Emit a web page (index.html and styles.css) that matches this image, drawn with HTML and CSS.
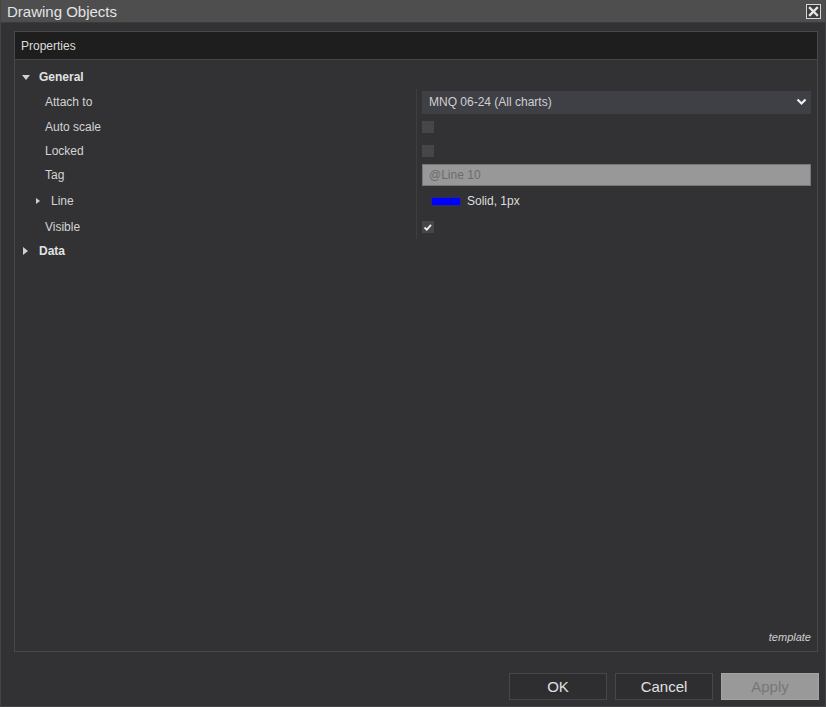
FILE: index.html
```html
<!DOCTYPE html>
<html lang="en">
<head>
    <meta charset="UTF-8">
    <title>Drawing Objects</title>
    <link rel="stylesheet" href="styles.css">
</head>
<body>
    <div class="window">
        <div class="titlebar">
            <span class="title">Drawing Objects</span>
            <span class="close">
                <svg width="15" height="15" viewBox="0 0 15 15">
                    <rect x="0.5" y="0.5" width="14" height="14" fill="#3c3c3c" stroke="#d8d8d8"/>
                    <path d="M4 4 L11 11 M11 4 L4 11" stroke="#e6e6e6" stroke-width="2.4" stroke-linecap="square"/>
                </svg>
            </span>
        </div>
        <div class="content">
            <div class="panel">
                <div class="panel-header">Properties</div>
                <div class="props">
                    <!-- General -->
                    <div class="cat h24"><span class="tri-down"></span>General</div>
                    <div class="row h26">
                        <div class="label">Attach to</div>
                        <div class="value">
                            <div class="select">
                                <span>MNQ 06-24 (All charts)</span>
                                <svg width="11" height="8" viewBox="0 0 11 8"><path d="M1.5 1.5 L5.5 5.5 L9.5 1.5" fill="none" stroke="#f0f0f0" stroke-width="2.2"/></svg>
                            </div>
                        </div>
                    </div>
                    <div class="row h24">
                        <div class="label">Auto scale</div>
                        <div class="value"><span class="check"></span></div>
                    </div>
                    <div class="row h24">
                        <div class="label">Locked</div>
                        <div class="value"><span class="check"></span></div>
                    </div>
                    <div class="row h24">
                        <div class="label">Tag</div>
                        <div class="value"><div class="input">@Line 10</div></div>
                    </div>
                    <div class="row h28">
                        <div class="label sub"><span class="tri-right small"></span>Line</div>
                        <div class="value"><span class="swatch"></span><span class="stroke-text">Solid, 1px</span></div>
                    </div>
                    <div class="row h24">
                        <div class="label">Visible</div>
                        <div class="value">
                            <span class="check">
                                <svg width="12" height="12" viewBox="0 0 12 12"><path d="M2.5 6.5 L4.8 8.6 L9 3.8" fill="none" stroke="#f0f0f0" stroke-width="1.8"/></svg>
                            </span>
                        </div>
                    </div>
                    <!-- Data -->
                    <div class="cat h24"><span class="tri-right"></span>Data</div>
                </div>
                <div class="template">template</div>
            </div>
            <div class="footer">
                <button class="btn">OK</button>
                <button class="btn">Cancel</button>
                <button class="btn disabled">Apply</button>
            </div>
        </div>
    </div>
</body>
</html>
```

FILE: styles.css
```css
body {
    margin: 0;
    background: #333336;
    font-family: "Liberation Sans", Arial, sans-serif;
    -webkit-font-smoothing: antialiased;
}
.window {
    width: 826px;
    height: 707px;
    box-sizing: border-box;
    border: 1px solid #444447;
    border-top: 0;
    background: #323235;
    display: flex;
    flex-direction: column;
}
.titlebar {
    height: 23px;
    background: #4e4e4e;
    border-bottom: 1px solid #3a3a3a;
    box-sizing: border-box;
    display: flex;
    align-items: center;
    justify-content: space-between;
    padding: 0 4px 0 6px;
}
.title {
    color: #e4e4e4;
    font-size: 15px;
    line-height: 23px;
}
.close { display: flex; margin-top: 1px; }
.content {
    flex: 1;
    padding: 8px 6px 0 13px;
    display: flex;
    flex-direction: column;
}
.panel {
    height: 621px;
    width: 804px;
    box-sizing: border-box;
    border: 1px solid #48484b;
    display: flex;
    flex-direction: column;
}
.panel-header {
    height: 28px;
    box-sizing: border-box;
    background: #1e1e1e;
    border-bottom: 1px solid #454548;
    color: #dcdcdc;
    font-size: 12px;
    line-height: 28px;
    padding-left: 6px;
}
.props {
    flex: 1;
    padding-top: 5px;
    font-size: 12px;
    color: #d4d4d4;
}
.h24 { height: 24px; }
.h26 { height: 26px; }
.h28 { height: 28px; }
.cat {
    display: flex;
    align-items: center;
    font-weight: bold;
    color: #e2e2e2;
    padding-left: 7px;
}
.tri-down {
    width: 0;
    height: 0;
    border-left: 4px solid transparent;
    border-right: 4px solid transparent;
    border-top: 5px solid #d0d0d0;
    margin-right: 9px;
}
.tri-right {
    width: 0;
    height: 0;
    border-top: 4.5px solid transparent;
    border-bottom: 4.5px solid transparent;
    border-left: 5px solid #d0d0d0;
    margin-left: 1px;
    margin-right: 11px;
}
.tri-right.small {
    border-top-width: 3.5px;
    border-bottom-width: 3.5px;
    border-left-width: 4px;
    margin-left: 0;
    margin-right: 11px;
}
.row { display: flex; }
.label {
    width: 402px;
    box-sizing: border-box;
    border-right: 1px solid #3e3e41;
    padding-left: 30px;
    display: flex;
    align-items: center;
}
.label.sub { padding-left: 21px; }
.value {
    flex: 1;
    padding: 0 6px 0 5px;
    display: flex;
    align-items: center;
}
.select {
    flex: 1;
    height: 23px;
    background: #3f3f46;
    display: flex;
    align-items: center;
    justify-content: space-between;
    padding: 0 4px 0 7px;
    color: #d0d0d0;
}
.check {
    width: 12px;
    height: 12px;
    background: #45454a;
    display: flex;
}
.input {
    flex: 1;
    height: 22px;
    box-sizing: border-box;
    background: #989898;
    border: 1px solid #777779;
    color: #6c6c6c;
    line-height: 20px;
    padding-left: 6px;
}
.swatch {
    width: 30px;
    height: 9px;
    box-sizing: border-box;
    background: #0000ff;
    border: 1px solid #2a2a70;
    margin-left: 9px;
    margin-right: 6px;
}
.stroke-text { color: #dcdcdc; }
.template {
    text-align: right;
    font-style: italic;
    font-size: 11px;
    color: #d0d0d0;
    padding: 0 6px 7px 0;
    line-height: 14px;
}
.footer {
    margin-top: 21px;
    display: flex;
    justify-content: flex-end;
    gap: 8px;
}
.btn {
    width: 98px;
    height: 27px;
    box-sizing: border-box;
    background: #2e2e31;
    border: 1px solid #47474a;
    color: #e0e0e0;
    font-family: "Liberation Sans", Arial, sans-serif;
    font-size: 15px;
    padding: 0;
}
.btn.disabled {
    background: #999999;
    border-color: #a4a4a4;
    color: #777777;
}
```
